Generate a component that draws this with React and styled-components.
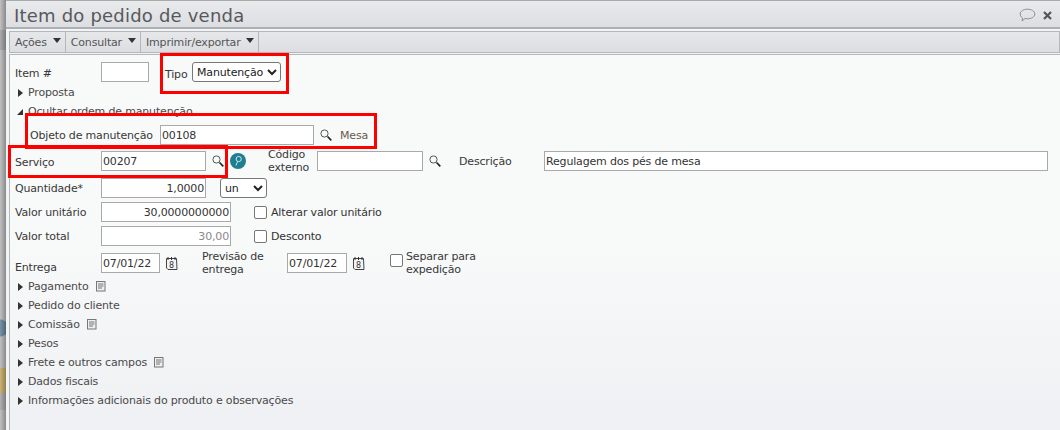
import React from 'react';
import styled, { createGlobalStyle } from 'styled-components';

const Global = createGlobalStyle`
  html, body { margin: 0; padding: 0; width: 1060px; height: 430px; overflow: hidden; background: #f6f7f8; }
  * { box-sizing: border-box; }
`;
const Page = styled.div`
  position: relative; width: 1060px; height: 430px; overflow: hidden; display: flex;
  font-family: "DejaVu Sans", Verdana, sans-serif; font-size: 11px; color: #333; letter-spacing: -.17px;
`;
const Backdrop = styled.div`
  width: 6px; flex: none;
  background:
    linear-gradient(90deg, rgba(190,190,190,.45) 0, rgba(90,90,90,.55) 6px),
    radial-gradient(circle at 0 328px, #3f6f96 0, #3f6f96 8px, transparent 9px),
    linear-gradient(#c4c4c4 30px, #9d9d9d 30px, #9d9d9d 50px, #c4c4c4 50px, #c4c4c4 368px, #d8ab3c 368px, #d8ab3c 393px, #a8a8a8 393px, #a8a8a8 410px, #c4c4c4 410px);
`;
const Win = styled.div`
  flex: 1; display: flex; flex-direction: column; border-top: 1px solid #a9abae; min-width: 0;
  background: #f3f4f6;
`;
const TitleBar = styled.div`
  height: 28px; flex: none; display: flex; align-items: center; justify-content: space-between;
  padding: 2px 4px 0 8px; background: linear-gradient(#e9eaec, #dcdee1); border-bottom: 2px solid #aeb1b4;
`;
const Title = styled.div`font-size: 18px; color: #56595c; letter-spacing: .2px;`;
const TitleIcons = styled.div`display: flex; align-items: center; gap: 7px; padding-right: 4px;`;
const Toolbar = styled.div`
  height: 22px; flex: none; margin: 2px 0 1px 3px; display: flex; background: linear-gradient(#e6e7e9, #dcdee1);
  border: 1px solid #b4b7ba;
`;
const ToolBtn = styled.div`
  display: flex; align-items: center; gap: 6px; padding: 0 4px 0 5px; color: #555;
  border-right: 1px solid #b4b7ba;
`;
const Caret = styled.span`
  width: 0; height: 0; border-left: 4px solid transparent; border-right: 4px solid transparent;
  border-top: 5px solid #333; margin-top: -3px;
`;
const Content = styled.div`
  flex: 1; margin-left: 3px; background: linear-gradient(#f8f9f9 50%, #eff0f3); border-top: 1px solid #b4b7ba; border-left: 1px solid #b4b7ba;
  padding: 7px 12px 0 5px; display: flex; flex-direction: column;
`;
const Row = styled.div`
  display: flex; align-items: center; height: ${p => p.$h || 20}px; flex: none;
  margin-top: ${p => p.$mt || 0}px;
`;
const Label = styled.span`
  width: ${p => p.$w}px; flex: none; color: #383838; line-height: 13px; padding-left: ${p => p.$pl || 0}px;
  margin-top: ${p => p.$mt || 0}px;
`;
const NoWrapLabel = styled(Label)`white-space: nowrap;`;
const Field = styled.input`
  width: ${p => p.$w}px; height: 20px; flex: none; border: 1px solid #a9a9a9; border-radius: 0; background: #fff;
  padding: 0 1px; font: 11px "DejaVu Sans", Verdana, sans-serif; letter-spacing: -.17px; color: ${p => p.$muted ? '#8a8a8a' : '#333'};
  text-align: ${p => p.$right ? 'right' : 'left'}; outline: none;
`;
const Select = styled.select`
  width: ${p => p.$w}px; height: 20px; flex: none; border: 1px solid #777; border-radius: 3px; background: #fff;
  font: 11px "DejaVu Sans", Verdana, sans-serif; color: #222; letter-spacing: -.17px; padding: 0;
`;
const Check = styled.span`
  width: 13px; height: 13px; flex: none; border: 1px solid #767676; border-radius: 2px; background: #fff;
  margin: ${p => p.$m || 0};
`;
const Section = styled.div`
  display: flex; align-items: center; height: 19px; flex: none; padding-left: 3px; color: #4a4a4a;
  margin-top: ${p => p.$mt || 0}px;
`;
const ClosedArrow = styled.span`
  width: 0; height: 0; flex: none; margin-right: 5px;
  border-left: 5px solid #333; border-top: 4px solid transparent; border-bottom: 4px solid transparent;
`;
const OpenArrow = styled.span`
  width: 0; height: 0; flex: none; margin: 0 5px 0 -1px;
  border-bottom: 6px solid #333; border-left: 6px solid transparent;
`;
const SectionList = styled.div`display: flex; flex-direction: column; margin-top: 4px;`;
const Link = styled.span`color: #6a5a4a; margin-left: 8px;`;
const Annot = styled.div`
  position: absolute; border: 3px solid #f00; pointer-events: none;
  left: ${p => p.$x}px; top: ${p => p.$y}px; width: ${p => p.$w}px; height: ${p => p.$h}px;
`;
const Gap = styled.span`width: ${p => p.$w}px; flex: none;`;

const Search = () => (
  <svg width="12" height="12" viewBox="0 0 12 12" style={{ flex: 'none' }} fill="none">
    <circle cx="4.500" cy="4.500" r="3.600" stroke="#555" strokeWidth="1" />
    <path d="M7.500 7.500l3.800 3.800" stroke="#222" strokeWidth="1.700" />
  </svg>
);
const Calendar = () => (
  <svg width="13" height="15" viewBox="0 0 13 15" style={{ flex: 'none' }} fill="none">
    <path d="M1.500 2.500h10l.5 11h-9l-1.500-1.500z" stroke="#444" fill="#f4f4f4" />
    <path d="M3 1v3M6.500 1v3M10 1v3" stroke="#333" />
    <text x="6.500" y="12" fontSize="8" fontFamily="DejaVu Sans" textAnchor="middle" fill="#333">8</text>
  </svg>
);
const Note = () => (
  <svg width="10" height="11" viewBox="0 0 10 11" style={{ flex: 'none', marginLeft: 7 }} fill="none">
    <rect x=".5" y=".5" width="8.500" height="9.500" stroke="#777" fill="#eee" />
    <path d="M2 3h5.500M2 5h5.500M2 7h4" stroke="#777" />
  </svg>
);
const Bubble = () => (
  <svg width="17" height="15" viewBox="0 0 17 15" fill="none">
    <path d="M8.500 1.200c4 0 7.300 2 7.300 4.800s-3.300 4.800-7.300 4.800c-.9 0-1.700-.1-2.500-.3L3 13l.5-3C2 9 1.200 7.600 1.200 6c0-2.800 3.300-4.800 7.300-4.800z" stroke="#8c8f92" />
  </svg>
);
const Close = () => (
  <svg width="9" height="9" viewBox="0 0 9 9"><path d="M1 1l7 7M8 1L1 8" stroke="#555" strokeWidth="2.200" /></svg>
);
const Help = () => (
  <svg width="16" height="16" viewBox="0 0 16 16" style={{ flex: 'none' }} fill="none">
    <circle cx="8" cy="8" r="8" fill="#1f7f92" />
    <circle cx="8.700" cy="6" r="2.600" stroke="#cfe6ea" />
    <path d="M7.500 8.500L6 12.500" stroke="#cfe6ea" />
  </svg>
);

const sections = [
  ['Pagamento', true], ['Pedido do cliente', false], ['Comissão', true], ['Pesos', false],
  ['Frete e outros campos', true], ['Dados fiscais', false], ['Informações adicionais do produto e observações', false],
];

export default function App() {
  return (
    <Page>
      <Global />
      <Backdrop />
      <Win>
        <TitleBar>
          <Title>Item do pedido de venda</Title>
          <TitleIcons><Bubble /><Close /></TitleIcons>
        </TitleBar>
        <Toolbar>
          <ToolBtn>Ações <Caret /></ToolBtn>
          <ToolBtn>Consultar <Caret /></ToolBtn>
          <ToolBtn>Imprimir/exportar <Caret /></ToolBtn>
        </Toolbar>
        <Content>
          <Row>
            <Label $w={86} $mt={2}>Item #</Label>
            <Field $w={48} />
            <Gap $w={16} />
            <Label $w={27} $mt={4}>Tipo</Label>
            <Select $w={89} defaultValue="m"><option value="m">Manutenção</option></Select>
          </Row>
          <Section $mt={1}><ClosedArrow />Proposta</Section>
          <Section><OpenArrow />Ocultar ordem de manutenção</Section>
          <Row $h={28}>
            <NoWrapLabel $w={145} $pl={15}>Objeto de manutenção</NoWrapLabel>
            <Field $w={154} defaultValue="00108" />
            <Gap $w={6} /><Search /><Link>Mesa</Link>
          </Row>
          <Row $mt={2}>
            <Label $w={86} $mt={2}>Serviço</Label>
            <Field $w={105} defaultValue="00207" />
            <Gap $w={6} /><Search /><Gap $w={6} /><Help />
            <Gap $w={22} />
            <Label $w={49}>Código externo</Label>
            <Field $w={106} />
            <Gap $w={6} /><Search /><Gap $w={18} />
            <Label $w={85}>Descrição</Label>
            <Field $w={504} defaultValue="Regulagem dos pés de mesa" />
          </Row>
          <Row $mt={7}>
            <Label $w={86}>Quantidade*</Label>
            <Field $w={105} $right defaultValue="1,0000" />
            <Gap $w={14} />
            <Select $w={47} defaultValue="un"><option value="un">un</option></Select>
          </Row>
          <Row $mt={4}>
            <Label $w={86}>Valor unitário</Label>
            <Field $w={130} $right defaultValue="30,0000000000" />
            <Check $m="0 4px 0 23px" />Alterar valor unitário
          </Row>
          <Row $mt={4}>
            <Label $w={86}>Valor total</Label>
            <Field $w={130} $right $muted defaultValue="30,00" />
            <Check $m="0 4px 0 23px" />Desconto
          </Row>
          <Row $mt={7}>
            <Label $w={86} $mt={8}>Entrega</Label>
            <Field $w={59} defaultValue="07/01/22" />
            <Gap $w={5} /><Calendar /><Gap $w={24} />
            <Label $w={85}>Previsão de entrega</Label>
            <Field $w={60} defaultValue="07/01/22" />
            <Gap $w={5} /><Calendar /><Gap $w={25} />
            <Check $m="-5px 3px 0 0" />
            <Label $w={100}>Separar para expedição</Label>
          </Row>
          <SectionList>
            {sections.map(([t, n]) => (
              <Section key={t}><ClosedArrow />{t}{n && <Note />}</Section>
            ))}
          </SectionList>
        </Content>
      </Win>
      <Annot $x={160} $y={53} $w={129} $h={41} />
      <Annot $x={25} $y={113} $w={352} $h={36} />
      <Annot $x={8} $y={145} $w={220} $h={33} />
    </Page>
  );
}
